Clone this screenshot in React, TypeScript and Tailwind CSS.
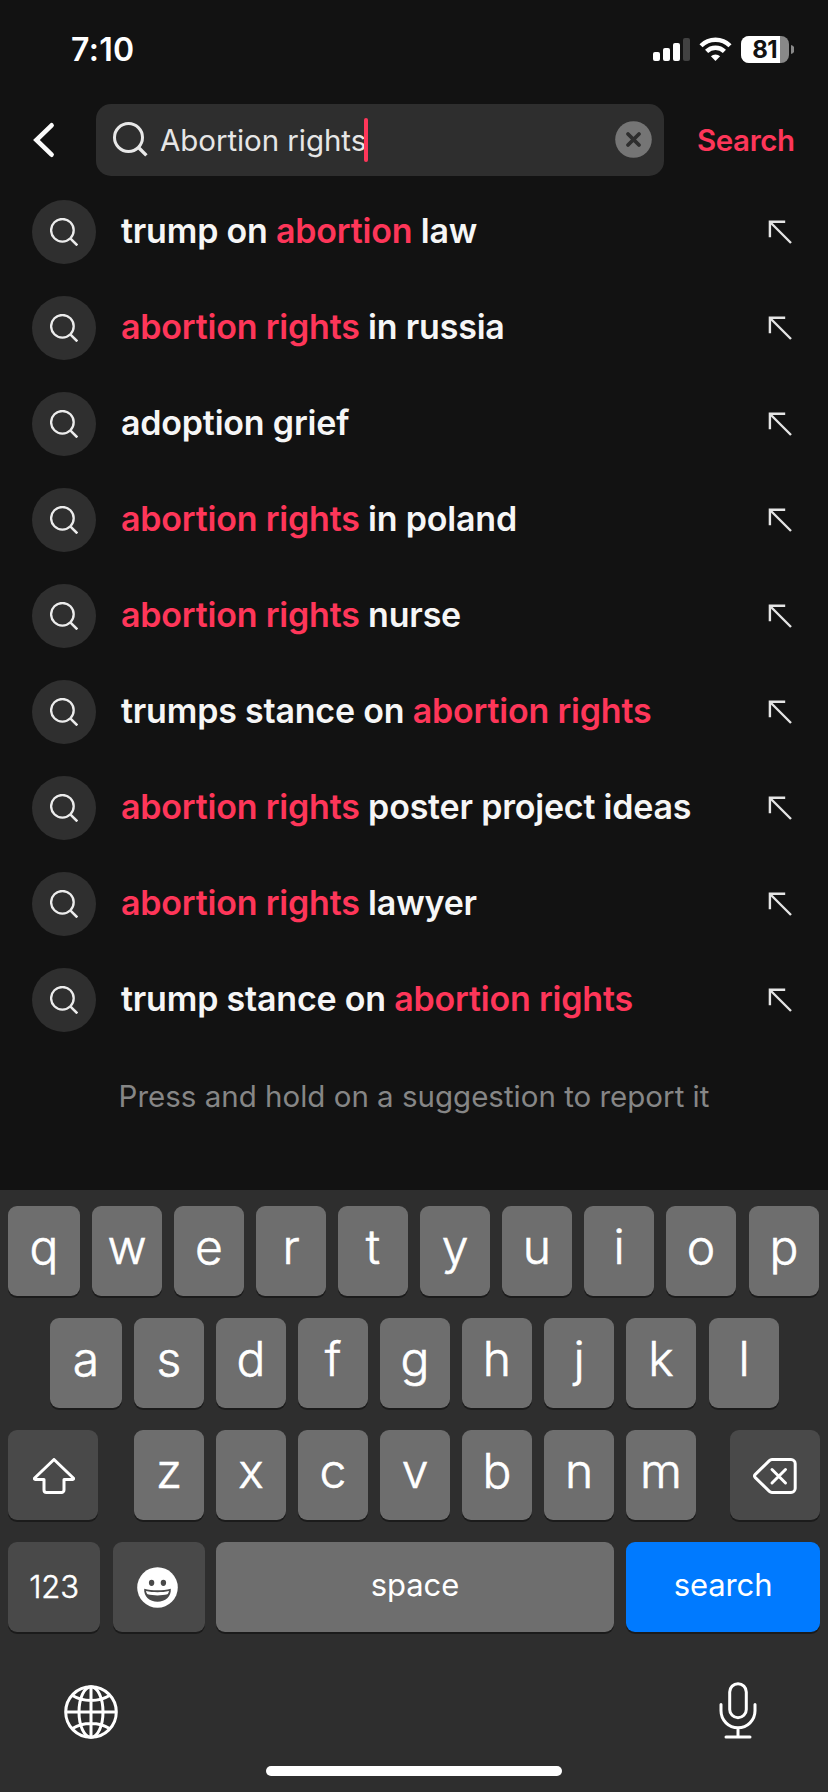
import type { ReactNode } from "react";
import clsx from "clsx";

interface Part {
  text: string;
  match?: boolean;
}

const SUGGESTIONS: Part[][] = [
  [{ text: "trump on " }, { text: "abortion", match: true }, { text: " law" }],
  [{ text: "abortion rights", match: true }, { text: " in russia" }],
  [{ text: "adoption grief" }],
  [{ text: "abortion rights", match: true }, { text: " in poland" }],
  [{ text: "abortion rights", match: true }, { text: " nurse" }],
  [{ text: "trumps stance on " }, { text: "abortion rights", match: true }],
  [{ text: "abortion rights", match: true }, { text: " poster project ideas" }],
  [{ text: "abortion rights", match: true }, { text: " lawyer" }],
  [{ text: "trump stance on " }, { text: "abortion rights", match: true }],
];

function StatusBar() {
  return (
    <div className="flex h-[104px] items-start justify-between pl-[71px] pr-[34px] text-white">
      <span className="mt-[30px] text-[32px] leading-[40px] font-semibold tracking-[0.3px]">7:10</span>
      <div className="mt-9 flex h-[27px] items-center">
        <svg className="h-[27px] w-[37px]" viewBox="0 0 37 27" fill="currentColor">
          <rect x="0" y="16" width="7" height="9" rx="2" />
          <rect x="10" y="12" width="7" height="13" rx="2" />
          <rect x="20" y="7" width="7" height="18" rx="2" />
          <rect x="30" y="2" width="7" height="23" rx="2" className="fill-[#414141]" />
        </svg>
        <svg className="ml-[9px] h-[27px] w-[33px]" viewBox="0 0 33 27" fill="none" stroke="currentColor">
          <path d="M2 9.8a20.5 20.5 0 0 1 29 0" strokeWidth="4.4" />
          <path d="M7.6 15.4a12.6 12.6 0 0 1 17.8 0" strokeWidth="4.4" />
          <path d="M16.5 25l-4.6-4.7a6.6 6.6 0 0 1 9.2 0z" fill="currentColor" stroke="none" />
        </svg>
        <div className="ml-[9px] flex h-[27px] w-12 overflow-hidden rounded-[8px] bg-[#888888]">
          <span className="flex w-[39px] items-center justify-end bg-white pr-[3px] text-[24px] leading-none font-bold tracking-[-0.6px] text-[#121212]">
            81
          </span>
        </div>
        <svg className="ml-0.5 h-[9px] w-[3px]" viewBox="0 0 3 9">
          <path d="M0 0a4.6 4.6 0 0 1 0 9z" className="fill-[#888888]" />
        </svg>
      </div>
    </div>
  );
}

function SearchBar() {
  return (
    <div className="flex h-[72px] items-center pl-8">
      <svg className="h-9 w-6" viewBox="0 0 24 36" fill="none" stroke="#fbfbfb" strokeWidth="4.6" strokeLinecap="round" strokeLinejoin="miter">
        <path d="M19.6 3.3L4.4 18l15.2 14.7" />
      </svg>
      <div className="ml-10 flex h-[72px] w-[568px] items-center rounded-[15px] bg-[#2e2e2e] pr-[13px] pl-4">
        <svg className="mb-0.5 h-9 w-9" viewBox="0 0 36 36" fill="none" stroke="#e8e8e8" strokeWidth="3">
          <circle cx="16.5" cy="16.5" r="14" />
          <path d="M26 26l8.4 8.4" strokeWidth="3.4" />
        </svg>
        <span className="ml-3 text-[29.5px] tracking-[-0.06px] text-[#e6e6e6]">Abortion rights</span>
        <span className="-ml-0.5 h-11 w-1 rounded-full bg-[#fe3659]" />
        <svg className="-mr-px mb-0.5 ml-auto h-[37px] w-[37px]" viewBox="0 0 37 37">
          <circle cx="18.5" cy="18.5" r="18.3" fill="#757575" />
          <path d="M13 13l11 11M24 13L13 24" stroke="#2e2e2e" strokeWidth="3.8" strokeLinecap="round" />
        </svg>
      </div>
      <span className="ml-[33px] text-[29.5px] font-semibold tracking-[-0.4px] text-[#fe3659]">Search</span>
    </div>
  );
}

function SuggestionRow({ parts }: { parts: Part[] }) {
  return (
    <div className="flex h-24 items-center pr-9 pl-8">
      <div className="flex h-16 w-16 shrink-0 items-center justify-center rounded-full bg-[#2f2f2f]">
        <svg className="h-7 w-7" viewBox="0 0 28 28" fill="none" stroke="#ececec" strokeWidth="2.3">
          <circle cx="12.4" cy="12.3" r="11.3" />
          <path d="M20.3 20.4l7 7" strokeWidth="2.5" />
        </svg>
      </div>
      <p className="mb-1 ml-[25px] flex-1 text-[34px] font-semibold tracking-[-0.2px] whitespace-pre text-[#f6f6f6]">
        {parts.map((part, i) => (
          <span key={i} className={clsx(part.match && "text-[#fe3659]")}>
            {part.text}
          </span>
        ))}
      </p>
      <svg className="h-6 w-6" viewBox="0 0 24 24" fill="none" stroke="#e4e4e4" strokeWidth="2.4">
        <path d="M17.2 1.8H1.9v15.4M2 2l21 21" />
      </svg>
    </div>
  );
}

const KEY = "flex h-[90px] items-center justify-center rounded-[9px] text-white shadow-[0_2px_0_#1b1b1b]";

function LetterKey({ label, className }: { label: string; className?: string }) {
  return (
    <button
      className={clsx(
        KEY,
        "bg-[#6e6e6e] pb-[9px] text-[48px] leading-none font-light [-webkit-text-stroke:0.6px_white]",
        className ?? "w-[70px]",
      )}
    >
      {label}
    </button>
  );
}

function SpecialKey({ children, className }: { children: ReactNode; className?: string }) {
  return <button className={clsx(KEY, "bg-[#494949]", className)}>{children}</button>;
}

function Keyboard() {
  return (
    <div className="h-[602px] bg-[#2e2e2e] pt-4">
      <div className="flex gap-3 pl-2">
        {"qwertyuio".split("").map((k, i) => (
          <LetterKey key={k} label={k} className={i === 0 ? "w-[72px]" : "w-[70px]"} />
        ))}
        <LetterKey label="p" className="ml-px w-[70px]" />
      </div>
      <div className="mt-[22px] flex gap-3 pl-[50px]">
        {"asdfghjk".split("").map((k, i) => (
          <LetterKey key={k} label={k} className={i === 0 ? "w-[72px]" : "w-[70px]"} />
        ))}
        <LetterKey label="l" className="ml-px w-[70px]" />
      </div>
      <div className="mt-[22px] flex justify-between px-2">
        <SpecialKey className="w-[90px]">
          <svg className="mt-0.5 ml-0.5 h-9 w-[42px]" viewBox="0 0 42 36" fill="none" stroke="currentColor" strokeWidth="3" strokeLinejoin="round">
            <path d="M21 1.5L40.3 20c.6.7.3 1.5-.6 1.5H31V32a2.5 2.5 0 0 1-2.5 2.5h-15A2.5 2.5 0 0 1 11 32V21.5H2.3c-.9 0-1.2-.8-.6-1.5z" />
          </svg>
        </SpecialKey>
        <div className="flex gap-3 pl-0.5">
          {"zxcvbnm".split("").map((k) => (
            <LetterKey key={k} label={k} />
          ))}
        </div>
        <SpecialKey className="w-[90px]">
          <svg className="mt-0.5 h-9 w-11" viewBox="0 0 44 36" fill="none" stroke="currentColor" strokeWidth="3" strokeLinecap="round" strokeLinejoin="round">
            <path d="M19 1.5h19a4.2 4.2 0 0 1 4.2 4.2v24.6a4.2 4.2 0 0 1-4.2 4.2H19a4 4 0 0 1-2.6-1.1L2.3 19.6a2.3 2.3 0 0 1 0-3.2L16.4 2.6A4 4 0 0 1 19 1.5z" />
            <path d="M19 11.5l13.5 13.5M32.5 11.5L19 25" />
          </svg>
        </SpecialKey>
      </div>
      <div className="mt-[22px] flex pl-2 text-[31px] tracking-[-0.1px]">
        <SpecialKey className="w-[92px]">
          <span className="font-light [-webkit-text-stroke:0.5px_white]">123</span>
        </SpecialKey>
        <SpecialKey className="ml-[13px] w-[92px]">
          <svg className="mr-[3px] h-[41px] w-[41px]" viewBox="0 0 41 41">
            <circle cx="20.5" cy="20.5" r="20.3" fill="#fff" />
            <ellipse cx="14.6" cy="15.8" rx="2.7" ry="3.1" fill="#494949" />
            <ellipse cx="26.4" cy="15.8" rx="2.7" ry="3.1" fill="#494949" />
            <path d="M7.2 21.8c8 2 18.6 2 26.6 0C34.5 29.5 28.2 34.8 20.5 34.8S6.5 29.5 7.2 21.8z" fill="#494949" />
            <path d="M9 24c7 1.6 16 1.6 23 0-.3 1.5-.9 2.5-1.6 3.3-6 1.5-13.8 1.5-19.8 0C9.9 26.5 9.3 25.5 9 24z" fill="#fff" />
          </svg>
        </SpecialKey>
        <button className={clsx(KEY, "ml-[11px] w-[398px] bg-[#6e6e6e] pb-[3px]")}>space</button>
        <button className={clsx(KEY, "ml-3 w-[194px] bg-[#007aff] pb-[3px]")}>search</button>
      </div>
      <div className="mt-[50px] flex items-start justify-between pr-[71px] pl-16 text-white">
        <svg className="mt-[3px] h-[54px] w-[54px]" viewBox="0 0 54 54" fill="none" stroke="currentColor" strokeWidth="3">
          <circle cx="27" cy="27" r="25.3" />
          <ellipse cx="27" cy="27" rx="12" ry="25.3" />
          <path d="M27 1.5v51M1.5 27h51M8.5 10.5c10.5 6.6 26.5 6.6 37 0M8.5 43.5c10.5-6.6 26.5-6.6 37 0" />
        </svg>
        <svg className="h-[57px] w-[38px]" viewBox="0 0 38 57" fill="none" stroke="currentColor" strokeWidth="3" strokeLinecap="round">
          <rect x="10.7" y="1.7" width="16.6" height="34" rx="8.3" />
          <path d="M2 22.5v6.3a17 17 0 0 0 34 0v-6.3M19 46v9M7 55h24" />
        </svg>
      </div>
      <div className="mx-auto mt-[27px] h-2.5 w-[296px] rounded-full bg-white" />
    </div>
  );
}

export default function App() {
  return (
    <div className="flex h-[1792px] w-[828px] flex-col overflow-hidden bg-[#121212] font-['Inter',sans-serif]">
      <StatusBar />
      <SearchBar />
      <div className="mt-2 flex-1">
        {SUGGESTIONS.map((parts, i) => (
          <SuggestionRow key={i} parts={parts} />
        ))}
        <p className="mt-7 text-center text-[29.5px] leading-[40px] text-[#868686]">
          Press and hold on a suggestion to report it
        </p>
      </div>
      <Keyboard />
    </div>
  );
}
